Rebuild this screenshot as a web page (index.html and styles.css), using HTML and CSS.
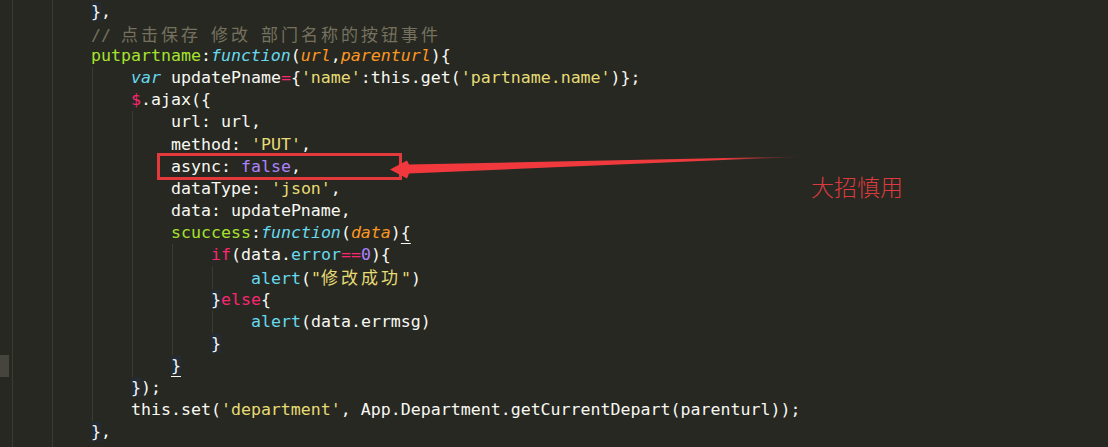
FILE: index.html
```html
<!DOCTYPE html>
<html lang="zh-CN">
<head>
    <meta charset="UTF-8">
    <title>putpartname</title>
    <link rel="stylesheet" href="styles.css">
</head>
<body>

    <div class="editor">
        <div class="code">
            <div class="line"><span class="gutter"></span><span class="text i12"><span class="brace">}</span>);</span></div>
            <div class="line"><span class="gutter"></span><span class="text i8"><span class="brace">}</span>,</span></div>
            <div class="line"><span class="gutter"></span><span class="text i8"><span class="cm">// <span class="cjk">点击保存</span> <span class="cjk">修改</span> <span class="cjk">部门名称的按钮事件</span></span></span></div>
            <div class="line"><span class="gutter"></span><span class="text i8"><span class="fn">putpartname</span>:<span class="st">function</span>(<span class="pa">url</span>,<span class="pa">parenturl</span>){</span></div>
            <div class="line"><span class="gutter"></span><span class="text i12"><span class="st">var</span> updatePname<span class="kw">=</span>{<span class="str">'name'</span>:this.get(<span class="str">'partname.name'</span>)};</span></div>
            <div class="line"><span class="gutter"></span><span class="text i12"><span class="kw">$</span>.ajax({</span></div>
            <div class="line"><span class="gutter"></span><span class="text i16">url: url,</span></div>
            <div class="line"><span class="gutter"></span><span class="text i16">method: <span class="str">'PUT'</span>,</span></div>
            <div class="line"><span class="gutter"></span><span class="text i16">async: <span class="num">false</span>,</span></div>
            <div class="line"><span class="gutter"></span><span class="text i16">dataType: <span class="str">'json'</span>,</span></div>
            <div class="line"><span class="gutter"></span><span class="text i16">data: updatePname,</span></div>
            <div class="line"><span class="gutter"></span><span class="text i16"><span class="fn">scuccess</span>:<span class="st">function</span>(<span class="pa">data</span>)<span class="match">{</span></span></div>
            <div class="line"><span class="gutter"></span><span class="text i20"><span class="kw">if</span>(data.<span class="sup">error</span><span class="kw">==</span><span class="num">0</span>){</span></div>
            <div class="line"><span class="gutter"></span><span class="text i24"><span class="sup">alert</span>(<span class="str">"<span class="cjk">修改成功</span>"</span>)</span></div>
            <div class="line"><span class="gutter"></span><span class="text i20"><span class="brace">}</span><span class="kw">else</span>{</span></div>
            <div class="line"><span class="gutter"></span><span class="text i24"><span class="sup">alert</span>(data.errmsg)</span></div>
            <div class="line"><span class="gutter"></span><span class="text i20"><span class="brace">}</span></span></div>
            <div class="line"><span class="gutter active"></span><span class="text i16"><span class="brace match">}</span></span></div>
            <div class="line"><span class="gutter"></span><span class="text i12"><span class="brace">}</span>);</span></div>
            <div class="line"><span class="gutter"></span><span class="text i12">this.set(<span class="str">'department'</span>, App.Department.getCurrentDepart(parenturl));</span></div>
            <div class="line"><span class="gutter"></span><span class="text i8"><span class="brace">}</span>,</span></div>
            <div class="line"><span class="gutter"></span><span class="text i8"><span class="cm">// <span class="cjk">删除部门</span></span></span></div>
        </div>

        <!-- annotation drawn over the code -->
        <div class="mark-box"></div>
        <svg class="arrow" width="1108" height="447" viewBox="0 0 1108 447">
            <defs>
                <linearGradient id="fade" x1="390" y1="0" x2="806" y2="0" gradientUnits="userSpaceOnUse">
                    <stop offset="0" stop-color="#f2383c"/>
                    <stop offset="0.8" stop-color="#ee3a3e"/>
                    <stop offset="1" stop-color="#ee3a3e" stop-opacity="0"/>
                </linearGradient>
            </defs>
            <polygon points="390,169.5 407,160.5 409,164.5 806,156.5 409,173.5 407,178.5" fill="url(#fade)"/>
        </svg>
        <div class="note">大招慎用</div>
    </div>

</body>
</html>
```

FILE: styles.css
```css
body {
    margin: 0;
    padding: 0;
    background-color: #272822;
    overflow: hidden;
    height: 447px;
}

.editor {
    position: relative;
    width: 1108px;
    height: 447px;
    overflow: hidden;
}

.code {
    margin-top: -21.4px;
    font-family: "DejaVu Sans Mono", "Noto Sans CJK SC", monospace;
    font-size: 16.6px;
    color: #f8f8f2;
}

.line {
    display: flex;
    height: 22.15px;
    line-height: 22.15px;
}

.gutter {
    width: 11px;
    flex-shrink: 0;
}

.gutter.active {
    width: 9px;
    margin-right: 2px;
    background-color: #45453e;
}

/* indent guides, one every 4 columns */
.text {
    white-space: pre;
    background-image: repeating-linear-gradient(to right, transparent 0 1px, #3a3b33 1px 2px, transparent 2px 40px);
    background-repeat: no-repeat;
    background-position: 0 0;
}

.i8 { padding-left: 80px; background-size: 80px 100%; }
.i12 { padding-left: 120px; background-size: 120px 100%; }
.i16 { padding-left: 160px; background-size: 160px 100%; }
.i20 { padding-left: 200px; background-size: 200px 100%; }
.i24 { padding-left: 240px; background-size: 240px 100%; }

.cjk {
    font-family: "Noto Sans CJK SC", sans-serif;
    font-size: 17px;
    letter-spacing: 3px;
}

.cm { color: #75715e; }
.fn { color: #a6e22e; }
.st { color: #66d9ef; font-style: italic; }
.pa { color: #fd971f; font-style: italic; }
.kw { color: #f92672; }
.str { color: #e6db74; }
.num { color: #ae81ff; }
.sup { color: #66d9ef; }

.brace {
    background-color: #222b36;
}

.match {
    text-decoration: underline;
    text-underline-offset: 5px;
    text-decoration-thickness: 1px;
}

.mark-box {
    position: absolute;
    left: 157px;
    top: 153px;
    width: 245px;
    height: 27px;
    border: 3px solid #e3393d;
    box-sizing: border-box;
}

.arrow {
    position: absolute;
    left: 0;
    top: 0;
}

.note {
    position: absolute;
    left: 811px;
    top: 171px;
    font-family: "Noto Sans CJK SC", sans-serif;
    font-size: 23px;
    font-weight: 300;
    line-height: 30px;
    color: #dc3a3e;
}
```
